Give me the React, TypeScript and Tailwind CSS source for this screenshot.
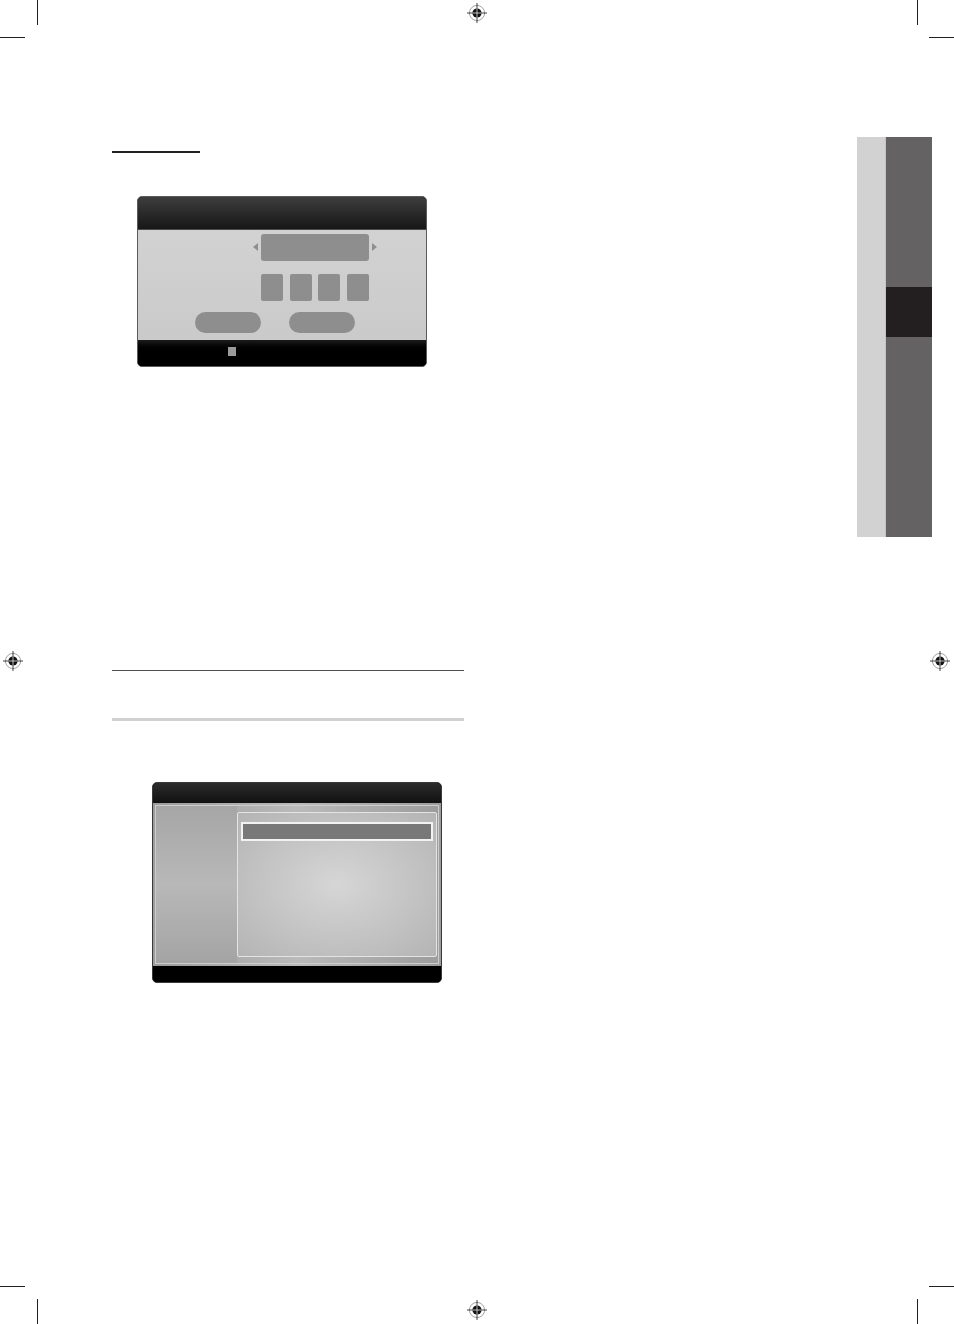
import React from 'react';

const RegMark: React.FC<{ className?: string }> = ({ className }) => (
  <svg className={className} width="22" height="22" viewBox="0 0 22 22">
    <circle cx="11" cy="11" r="7.6" fill="none" stroke="#8a8a8a" strokeWidth="0.8" />
    <line x1="11" y1="1" x2="11" y2="21" stroke="#111" strokeWidth="0.8" />
    <line x1="1" y1="11" x2="21" y2="11" stroke="#111" strokeWidth="0.8" />
    <circle cx="11" cy="11" r="4.6" fill="#111" />
    <line x1="11" y1="6.4" x2="11" y2="15.6" stroke="#fff" strokeWidth="0.7" />
    <line x1="6.4" y1="11" x2="15.6" y2="11" stroke="#fff" strokeWidth="0.7" />
  </svg>
);

const PinDialog: React.FC = () => (
  <div className="ml-[25px] mt-[43px] flex h-[171px] w-[290px] flex-col overflow-hidden rounded-[5px] border border-[#5a5a5a] bg-black">
    <div className="h-[33px] border-b border-[#4a4a4a] bg-gradient-to-b from-[#3e3e3e] to-[#171717]" />
    <div className="flex h-[110px] flex-col bg-gradient-to-b from-[#d2d2d2] to-[#cacaca]">
      <div className="flex items-center gap-[3px] pl-[115px] pt-[4px]">
        <div className="h-0 w-0 border-y-[4px] border-r-[5px] border-y-transparent border-r-[#8e8e8e]" />
        <div className="h-[27px] w-[108px] rounded-[3px] bg-[#8e8e8e]" />
        <div className="h-0 w-0 border-y-[4px] border-l-[5px] border-y-transparent border-l-[#8e8e8e]" />
      </div>
      <div className="ml-[123px] mt-[13px] flex w-[108px] justify-between">
        <div className="h-[27px] w-[22px] rounded-[2px] bg-[#8e8e8e]" />
        <div className="h-[27px] w-[22px] rounded-[2px] bg-[#8e8e8e]" />
        <div className="h-[27px] w-[22px] rounded-[2px] bg-[#8e8e8e]" />
        <div className="h-[27px] w-[22px] rounded-[2px] bg-[#8e8e8e]" />
      </div>
      <div className="mt-[11px] flex gap-[28px] pl-[57px]">
        <div className="h-[21px] w-[66px] rounded-full bg-[#8e8e8e]" />
        <div className="h-[21px] w-[66px] rounded-full bg-[#8e8e8e]" />
      </div>
    </div>
    <div className="flex-1 bg-gradient-to-b from-[#1c1c1c] via-black to-black pl-[90px] pt-[7px]">
      <div className="h-[9px] w-[8px] bg-[#9a9a9a]" />
    </div>
  </div>
);

const ListDialog: React.FC = () => (
  <div className="ml-[40px] mt-[61px] flex h-[201px] w-[290px] flex-col overflow-hidden rounded-[5px] border border-[#3a3a3a] bg-black">
    <div className="h-[20px] bg-gradient-to-b from-[#2c2c2c] to-[#111]" />
    <div className="h-[163px] bg-gradient-to-r from-[#9c9c9c] via-[#bababa] to-[#9c9c9c] p-[2px]">
      <div className="flex h-full border border-[#cdcdcd]">
        <div className="w-[81px] bg-gradient-to-b from-[#a6a6a6] via-[#b8b8b8] to-[#a4a4a4]" />
        <div className="my-[6px] mr-[1px] flex-1 rounded-[2px] border border-[#e4e4e4] bg-radial from-[#d6d6d6] to-[#b4b4b4]">
          <div className="mx-[3px] mt-[9px] h-[19px] border-2 border-[#f2f2f2] bg-[#787878]" />
        </div>
      </div>
    </div>
    <div className="flex-1 bg-black" />
  </div>
);

const SideTab: React.FC = () => (
  <div className="ml-auto mr-[22px] mt-[137px] flex h-[400px] w-[75px]">
    <div className="w-[29px] border-r border-[#c4c4c4] bg-[#d2d2d2]" />
    <div className="flex flex-1 flex-col">
      <div className="h-[150px] bg-[#656263]" />
      <div className="h-[50px] bg-[#231f20]" />
      <div className="flex-1 bg-[#656263]" />
    </div>
  </div>
);

export default function App() {
  return (
    <div className="relative h-[1324px] w-[954px] overflow-hidden bg-white">
      {/* print crop marks */}
      <div className="absolute left-[37px] top-0 h-[25px] w-px bg-[#231f20]" />
      <div className="absolute left-0 top-[37px] h-px w-[25px] bg-[#231f20]" />
      <div className="absolute left-[917px] top-0 h-[25px] w-px bg-[#231f20]" />
      <div className="absolute left-[929px] top-[37px] h-px w-[25px] bg-[#231f20]" />
      <div className="absolute left-0 top-[1286px] h-px w-[25px] bg-[#231f20]" />
      <div className="absolute left-[37px] top-[1299px] h-[25px] w-px bg-[#231f20]" />
      <div className="absolute left-[929px] top-[1286px] h-px w-[25px] bg-[#231f20]" />
      <div className="absolute left-[917px] top-[1299px] h-[25px] w-px bg-[#231f20]" />
      <RegMark className="absolute left-[466px] top-[2px]" />
      <RegMark className="absolute left-[2px] top-[650px]" />
      <RegMark className="absolute left-[929px] top-[650px]" />
      <RegMark className="absolute left-[466px] top-[1299px]" />

      <div className="flex items-start">
        <div className="ml-[112px] flex w-[352px] flex-col">
          <div className="mt-[151px] h-[1.5px] w-[88px] bg-[#231f20]" />
          <PinDialog />
          <div className="mt-[303px] h-px w-full bg-[#4d4d4d]" />
          <div className="mt-[47px] h-[3px] w-full bg-[#d0d0d0]" />
          <ListDialog />
        </div>
        <SideTab />
      </div>
    </div>
  );
}
